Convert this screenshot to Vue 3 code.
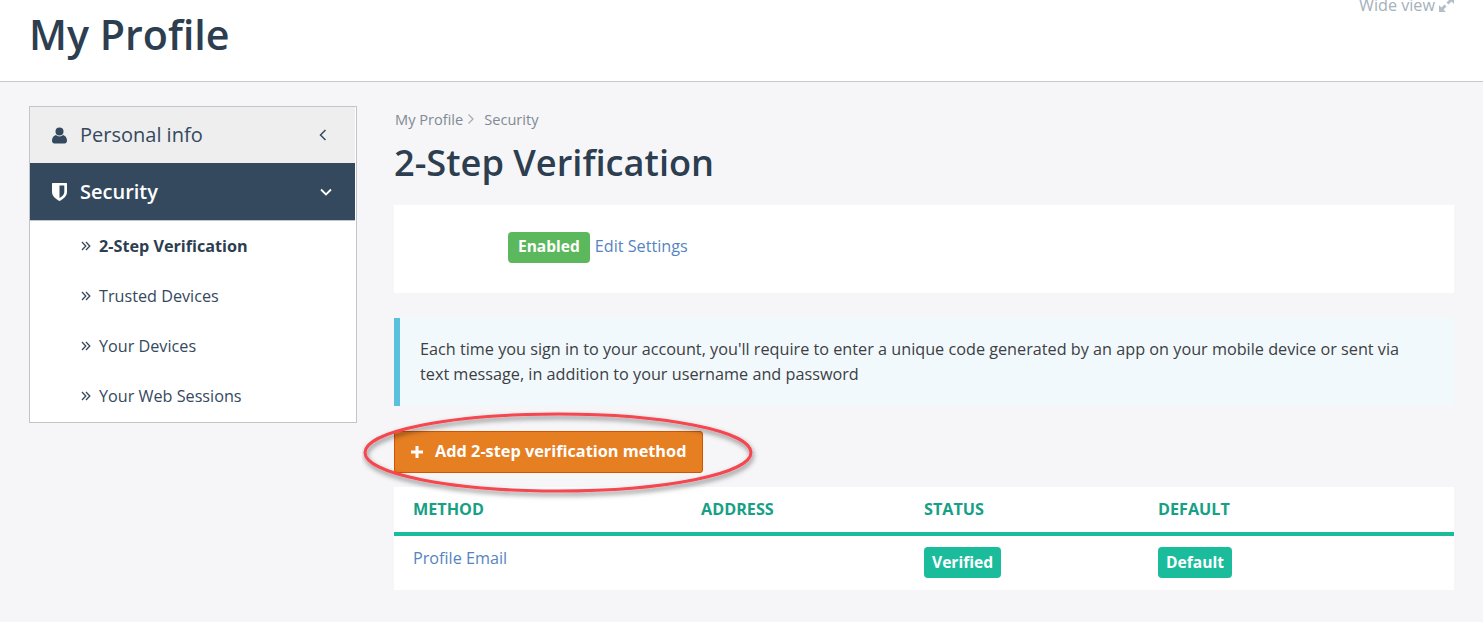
<script setup>
const subItems = [
  { label: '2-Step Verification', active: true },
  { label: 'Trusted Devices' },
  { label: 'Your Devices' },
  { label: 'Your Web Sessions' }
]

const columns = ['Method', 'Address', 'Status', 'Default']
</script>

<template>
  <div class="page">
    <header class="top">
      <h1 class="title">My Profile</h1>
      <a class="wide">
        Wide view
        <svg width="15" height="15" viewBox="0 0 15 15" fill="#b4bec6">
          <path d="M8 0h7v7l-2.500-2.500L9.500 7.500 7.500 5.500l3-3zM7 15H0V8l2.500 2.500 3-3 2 2-3 3z" />
        </svg>
      </a>
    </header>

    <div class="body">
      <aside class="side">
        <div class="side-row">
          <svg class="side-icon" width="15" height="17" viewBox="0 0 15 17" fill="#34495e">
            <circle cx="7.500" cy="4.500" r="4" />
            <path d="M0 13.500C0 10.500 2 8.500 3.800 8c1 .9 2.300 1.400 3.700 1.400S10.200 8.900 11.200 8C13 8.500 15 10.500 15 13.500 15 15.500 14 16.500 12.500 16.500h-10C1 16.500 0 15.500 0 13.500z" />
          </svg>
          <span class="side-label">Personal info</span>
          <svg class="chev" width="8" height="12" viewBox="0 0 8 12" fill="none" stroke="#34495e" stroke-width="1.500">
            <path d="M6.500 1L1.500 6l5 5" />
          </svg>
        </div>
        <div class="side-row current">
          <svg class="side-icon" width="15" height="18" viewBox="0 0 15 18">
            <path fill="#fff" d="M.5 0h14c.3 0 .5.200.5.500V9c0 4-3.500 6.800-7.500 9C3.500 15.800 0 13 0 9V.5C0 .2.200 0 .5 0z" />
            <path fill="#34495e" d="M7.500 2.500h4.800V9c0 2.500-2.200 4.500-4.800 6z" />
          </svg>
          <span class="side-label">Security</span>
          <svg class="chev-down" width="12" height="8" viewBox="0 0 12 8" fill="none" stroke="#fff" stroke-width="1.800">
            <path d="M1 1.500l5 5 5-5" />
          </svg>
        </div>
        <ul class="sub">
          <li v-for="item in subItems" :key="item.label" :class="{ active: item.active }">
            <svg class="quote" width="10" height="10" viewBox="0 0 10 10" fill="none" stroke="#34495e" stroke-width="1.300">
              <path d="M1 1l3.800 4L1 9M5 1l3.800 4L5 9" />
            </svg>
            {{ item.label }}
          </li>
        </ul>
      </aside>

      <main class="main">
        <div class="crumbs">
          <span>My Profile</span>
          <svg width="8" height="12" viewBox="0 0 8 12" fill="none" stroke="#a4aab0" stroke-width="1.200">
            <path d="M1.500 1.500L6 6l-4.500 4.500" />
          </svg>
          <span>Security</span>
        </div>
        <h2 class="heading">2-Step Verification</h2>

        <section class="card">
          <span class="badge enabled">Enabled</span>
          <a class="link">Edit Settings</a>
        </section>

        <section class="info">
          Each time you sign in to your account, you'll require to enter a unique code generated by an app on your mobile device or sent via text message, in addition to your username and password
        </section>

        <div class="action">
          <button class="add" type="button">
            <svg width="12" height="12" viewBox="0 0 12 12" fill="#fff">
              <path d="M4.500 0h3v4.500H12v3H7.500V12h-3V7.500H0v-3h4.500z" />
            </svg>
            Add 2-step verification method
          </button>
          <svg class="ring" width="400" height="92" viewBox="0 0 400 92" fill="none">
            <defs>
              <filter id="ring-shadow" x="-5%" y="-20%" width="110%" height="150%">
                <feDropShadow dx="1" dy="3" stdDeviation="2.500" flood-color="#000" flood-opacity="0.5" />
              </filter>
            </defs>
            <ellipse cx="196" cy="41.500" rx="193" ry="38.500" stroke="#f5474f" stroke-width="3" filter="url(#ring-shadow)" />
          </svg>
        </div>

        <section class="table">
          <div class="thead">
            <span v-for="col in columns" :key="col">{{ col }}</span>
          </div>
          <div class="trow">
            <a class="link email">Profile Email</a>
            <span></span>
            <span><b class="badge teal">Verified</b></span>
            <span><b class="badge teal">Default</b></span>
          </div>
        </section>
      </main>
    </div>
  </div>
</template>

<style>
html,
body {
  margin: 0;
  background: #f6f6f8;
}
</style>

<style scoped>
.page {
  height: 622px;
  overflow: hidden;
  font-family: "Open Sans", sans-serif;
  font-size: 14px;
  color: #34495e;
  background: #f6f6f8;
}

.top {
  height: 73px;
  padding: 8px 29px 0;
  display: flex;
  justify-content: space-between;
  align-items: flex-start;
  background: #fff;
  border-bottom: 1px solid #c9c9c9;
}

.title {
  margin: -1px 0 0;
  font-size: 41.200px;
  line-height: 54px;
  font-weight: 600;
  color: #2c3e50;
}

.wide {
  margin-top: -13px;
  display: flex;
  align-items: center;
  gap: 4px;
  font-size: 16.200px;
  line-height: 20px;
  color: #a5b1bb;
}

.wide svg {
  margin-top: -1px;
}

.body {
  display: flex;
  padding: 24px 29px 0;
  gap: 37px;
}

.side {
  width: 328px;
  height: 317px;
  box-sizing: border-box;
  flex-shrink: 0;
  padding-right: 1px;
  border: 1px solid #bfc5cb;
  background: #fff;
}

.side-row {
  height: 56px;
  display: flex;
  align-items: center;
  padding: 0 22px;
  background: #eeeeee;
  font-size: 20px;
  color: #34495e;
}

.side-row:not(.current) .side-label {
  margin-top: -2px;
}

.side-row.current {
  height: 57px;
  border-bottom: 1px solid #bfc5cb;
  background: #34495e;
  color: #fff;
  font-weight: 600;
}

.side-icon {
  margin-right: 13px;
}

.side-label {
  flex: 1;
}

.chev {
  margin-right: 6px;
}

.chev-down {
  margin-right: 1px;
}

.sub {
  list-style: none;
  margin: 0;
  padding: 0;
}

.sub li {
  height: 50px;
  display: flex;
  align-items: center;
  padding-left: 51px;
  font-size: 16.200px;
  color: #34495e;
}

.sub li.active {
  font-weight: 700;
  color: #2c3e50;
}

.quote {
  margin-right: 8px;
}

.main {
  flex: 1;
  min-width: 0;
}

.crumbs {
  display: flex;
  align-items: center;
  gap: 4px;
  height: 26px;
  padding-left: 1px;
  font-size: 14.600px;
  color: #7f8a94;
}

.crumbs svg {
  margin-right: 5px;
}

.heading {
  margin: 6px 0 18px;
  font-size: 36.200px;
  line-height: 49px;
  font-weight: 600;
  color: #2c3e50;
}

.card {
  height: 88px;
  box-sizing: border-box;
  padding: 27px 0 0 114px;
  display: flex;
  align-items: flex-start;
  gap: 5px;
  background: #fff;
}

.badge {
  display: inline-block;
  border-radius: 4px;
  color: #fff;
  font-weight: 700;
}

.enabled {
  height: 31px;
  line-height: 29px;
  padding: 0 10px;
  font-size: 15.500px;
  background: #5cb85c;
}

.link {
  color: #5585c0;
  font-size: 16.200px;
  line-height: 29px;
}

.info {
  margin-top: 25px;
  height: 88px;
  box-sizing: border-box;
  padding: 19px 50px 0 20px;
  border-left: 6px solid #5bc0de;
  background: #f2f9fd;
  font-size: 16.230px;
  line-height: 25px;
  color: #3c4043;
}

.action {
  position: relative;
  margin-top: 25px;
  height: 56px;
}

.add {
  height: 42px;
  width: 309px;
  box-sizing: border-box;
  padding: 0 0 3px 16px;
  display: flex;
  align-items: center;
  gap: 12px;
  border: 1px solid #d35400;
  border-radius: 3px;
  background: #e67e22;
  color: #fff;
  font-family: inherit;
  font-size: 16.300px;
  font-weight: 700;
}

.add svg {
  margin-top: 2px;
}

.ring {
  position: absolute;
  left: -32px;
  top: -20px;
  pointer-events: none;
}

.table {
  background: #fff;
  height: 103px;
}

.thead,
.trow {
  display: grid;
  grid-template-columns: 288px 223px 234px 1fr;
  padding-left: 19px;
}

.thead {
  height: 43px;
  padding-bottom: 2px;
  align-items: center;
  border-bottom: 4px solid #1abc9c;
  font-size: 16.200px;
  font-weight: 700;
  text-transform: uppercase;
  color: #16a085;
}

.trow {
  padding-top: 11px;
}

.email {
  font-size: 16.200px;
  line-height: 22px;
}

.teal {
  height: 31px;
  line-height: 31px;
  padding: 0 8px;
  font-size: 15.600px;
  background: #1abc9c;
}
</style>
